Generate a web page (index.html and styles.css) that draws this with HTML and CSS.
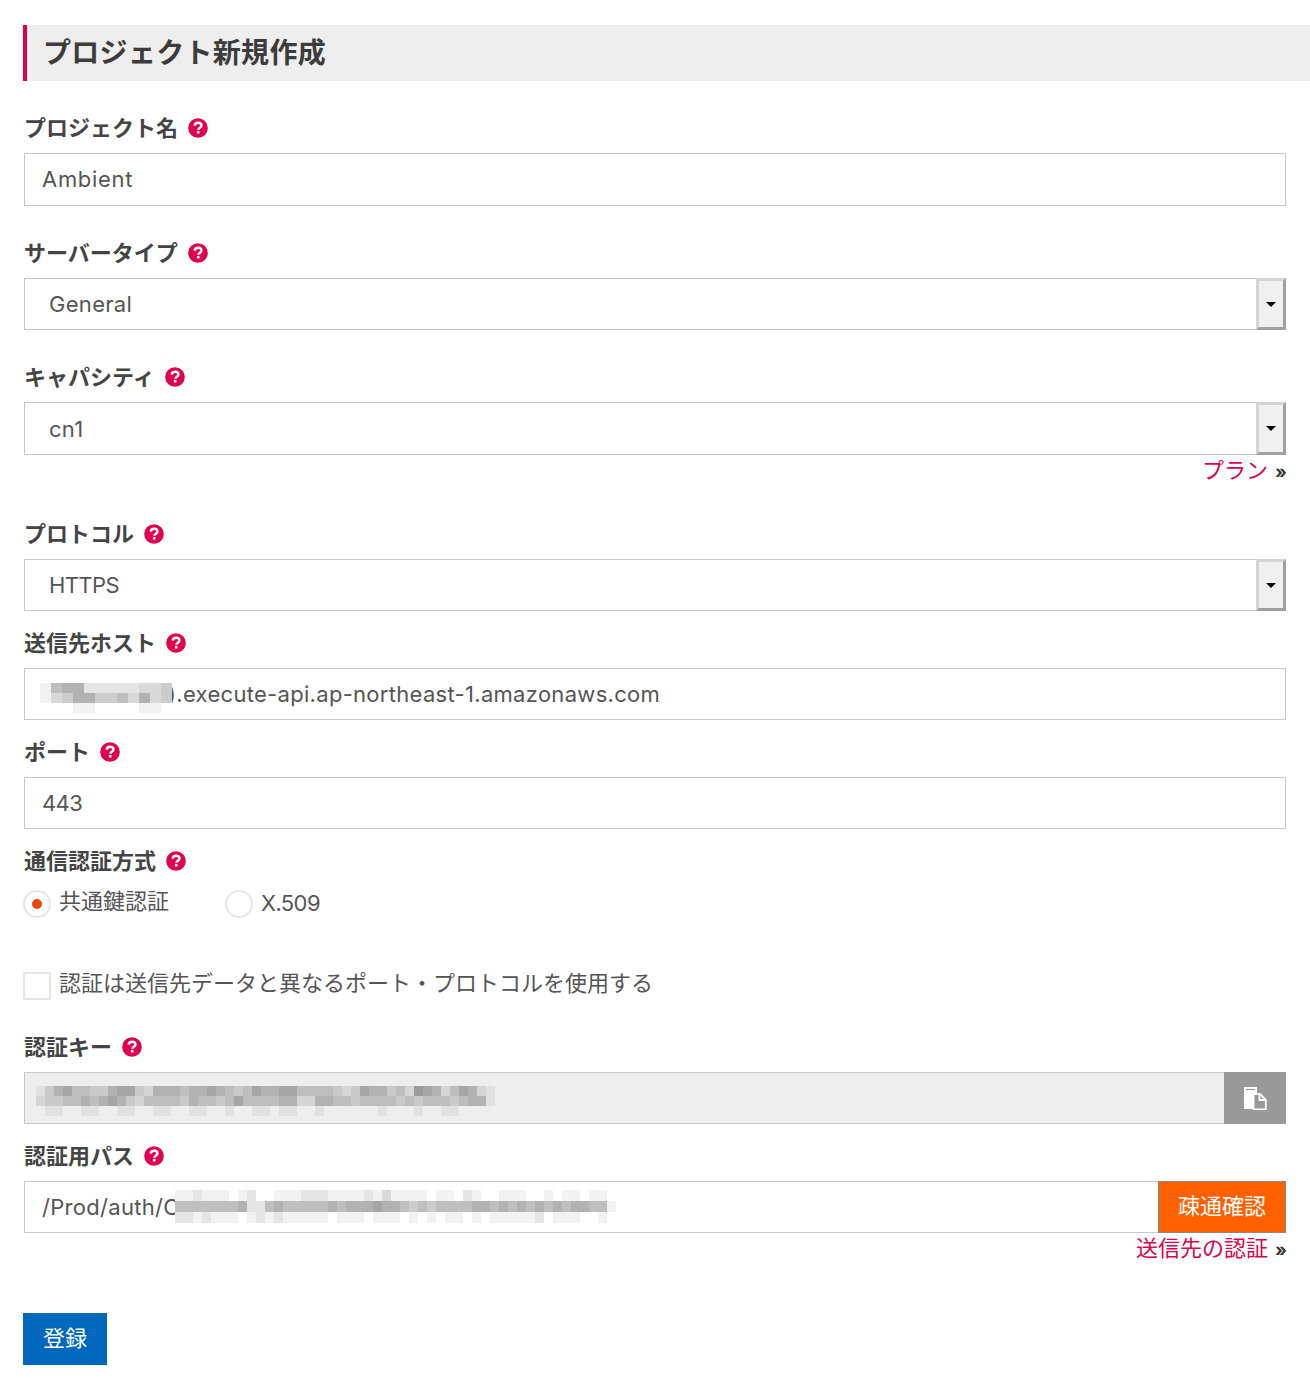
FILE: index.html
```html
<!DOCTYPE html>
<html lang="ja">
<head>
    <meta charset="utf-8">
    <title>プロジェクト新規作成</title>
    <link rel="stylesheet" href="styles.css">
</head>
<body>
    <svg class="icon-defs" width="0" height="0">
        <symbol id="help" viewBox="0 0 20 20">
            <circle cx="10" cy="10" r="9.8" fill="#e0004d"/>
            <path d="M6.7 7.6c.2-1.9 1.6-2.9 3.4-2.9 1.9 0 3.3 1.1 3.3 2.7 0 2.4-3 2.3-3 4.4" fill="none" stroke="#fff" stroke-width="2.5"/>
            <rect x="8.9" y="12.9" width="2.6" height="2.6" fill="#fff"/>
        </symbol>
    </svg>

    <h1 class="page-title">プロジェクト新規作成</h1>

    <form class="form">
        <div class="field">
            <label class="field-label">プロジェクト名<svg class="help"><use href="#help"/></svg></label>
            <input class="input input-tall" type="text" value="Ambient">
        </div>

        <div class="field">
            <label class="field-label">サーバータイプ<svg class="help"><use href="#help"/></svg></label>
            <div class="select"><span class="select-value">General</span><span class="select-btn"></span></div>
        </div>

        <div class="field field-link">
            <label class="field-label">キャパシティ<svg class="help"><use href="#help"/></svg></label>
            <div class="select select-tall"><span class="select-value">cn1</span><span class="select-btn"></span></div>
            <p class="more"><a href="#">プラン</a><span class="more-arrow">»</span></p>
        </div>

        <div class="field field-tight">
            <label class="field-label">プロトコル<svg class="help"><use href="#help"/></svg></label>
            <div class="select"><span class="select-value narrow">HTTPS</span><span class="select-btn"></span></div>
        </div>

        <div class="field field-tight">
            <label class="field-label">送信先ホスト<svg class="help"><use href="#help"/></svg></label>
            <div class="masked">
                <input class="input input-host" type="text" value=").execute-api.ap-northeast-1.amazonaws.com">
                <div class="blur blur-host" data-cell="11" data-height="10" data-rows="156622222334,134664453634,000110000110"></div>
            </div>
        </div>

        <div class="field field-tight">
            <label class="field-label">ポート<svg class="help"><use href="#help"/></svg></label>
            <input class="input narrow" type="text" value="443">
        </div>

        <div class="field field-auth">
            <label class="field-label">通信認証方式<svg class="help"><use href="#help"/></svg></label>
            <div class="choices">
                <label class="choice choice-first"><span class="radio radio-on"></span><span class="choice-text">共通鍵認証</span></label>
                <label class="choice"><span class="radio"></span><span class="choice-latin narrow">X.509</span></label>
            </div>
        </div>

        <label class="choice check-row"><span class="checkbox"></span><span class="choice-text">認証は送信先データと異なるポート・プロトコルを使用する</span></label>

        <div class="field field-tight">
            <label class="field-label">認証キー<svg class="help"><use href="#help"/></svg></label>
            <div class="group">
                <div class="masked group-main">
                    <input class="input input-readonly" type="text" readonly>
                    <div class="blur blur-key" data-cell="9" data-height="10" data-rows="135644335663255545565434655664444323655342765246521,233445456532444435443464444552255443444434344434551,011001100110011001100100110110010000001000100110000"></div>
                </div>
                <button class="btn-copy" type="button" aria-label="copy">
                    <svg width="24" height="24" viewBox="0 0 24 24">
                        <path d="M1 1h13v7h-4v15H1z" fill="#fff"/>
                        <path d="M3 3.500h9" stroke="#999" stroke-width="1.200"/>
                        <path d="M10.500 8h6.500l5.800 5.800v9.500H10.500z" fill="#999" stroke="#fff" stroke-width="1.800"/>
                        <path d="M16.500 8v6h6" fill="none" stroke="#fff" stroke-width="1.800"/>
                    </svg>
                </button>
            </div>
        </div>

        <div class="field field-link-short">
            <label class="field-label">認証用パス<svg class="help"><use href="#help"/></svg></label>
            <div class="group">
                <div class="masked group-main">
                    <input class="input input-path" type="text" value="/Prod/auth/C">
                    <div class="blur blur-path" data-cell="9" data-height="11" data-rows="11211101200111222111121311110110210011100101101100,55555556225655555656667665454555566565656565665510,22121110121211111011101110101011010111112011100100"></div>
                </div>
                <button class="btn-check" type="button">疎通確認</button>
            </div>
            <p class="more"><a href="#">送信先の認証</a><span class="more-arrow">»</span></p>
        </div>

        <button class="btn-submit" type="button">登録</button>
    </form>

    <script src="blur.js"></script>
</body>
</html>
```

FILE: styles.css
```css
* {
    box-sizing: border-box;
}
body {
    margin: 0;
    background: #fff;
    color: #444;
    font-family: Inter, "Noto Sans CJK JP", sans-serif;
    font-size: 22px;
}
.icon-defs {
    position: absolute;
}
.page-title {
    margin: 25px 0 33px 23px;
    height: 56px;
    padding-left: 16px;
    border-left: 4px solid #e0004d;
    background: #eee;
    font-size: 28px;
    font-weight: 700;
    letter-spacing: 0.3px;
    line-height: 57px;
    color: #3c3c3c;
}
.form {
    padding: 0 24px;
}
.field {
    margin-bottom: 33px;
}
.field-tight {
    margin-bottom: 18px;
}
.field-link {
    margin-bottom: 37px;
}
.field-link-short {
    margin-bottom: 52px;
}
.field-auth {
    margin-bottom: 54px;
}
.field-label {
    display: flex;
    align-items: center;
    height: 26px;
    padding-top: 1px;
    margin-bottom: 13px;
    font-weight: 700;
    line-height: 26px;
}
.help {
    width: 20px;
    height: 20px;
    margin-left: 10px;
}
.input {
    display: block;
    width: 100%;
    height: 52px;
    padding: 0 17px;
    border: 1px solid #c8c8c8;
    background: #fff;
    color: #555;
    font-family: inherit;
    font-size: 22px;
    letter-spacing: 0.3px;
    outline: none;
}
.input-tall {
    height: 53px;
    padding-bottom: 2px;
    letter-spacing: 0.7px;
}
.input-host {
    padding-left: 143px;
}
.input-readonly {
    background: #eee;
    border-right: none;
}
.input-path {
    border-right: none;
}
.select {
    display: flex;
    align-items: center;
    justify-content: space-between;
    height: 52px;
    border: 1px solid #c8c8c8;
    border-right: none;
}
.select-tall {
    height: 53px;
}
.select-value {
    padding-left: 24px;
    color: #555;
    letter-spacing: 0.3px;
}
.select-value.narrow,
.input.narrow,
.choice-latin.narrow {
    letter-spacing: -0.6px;
}
.select-btn {
    display: flex;
    align-items: center;
    justify-content: center;
    align-self: stretch;
    width: 30px;
    margin: -1px 0;
    border: 3px solid;
    border-color: #d4d4d4 #a0a0a0 #a0a0a0 #d4d4d4;
    background: #f0f0f0;
}
.select-btn::after {
    content: "";
    border: 5px solid transparent;
    border-top-color: #000;
    border-bottom: none;
}
.more {
    margin: 2px 0 0;
    height: 26px;
    line-height: 26px;
    text-align: right;
    font-size: 22px;
}
.more a {
    color: #e0004d;
    text-decoration: none;
}
.more-arrow {
    margin: 0 -1px 0 7px;
    font-size: 18px;
    font-weight: 700;
    color: #333;
}
.choices {
    display: flex;
    padding-top: 4px;
}
.choice {
    display: flex;
    align-items: center;
    height: 28px;
    color: #555;
}
.choice-first {
    margin-right: 57px;
}
.choice-text {
    padding-bottom: 10px;
}
.choice-latin {
    padding-bottom: 2px;
}
.radio,
.checkbox {
    display: flex;
    align-items: center;
    justify-content: center;
    flex: none;
    width: 28px;
    height: 28px;
    margin: 0 8px 0 -1px;
    border: 2px solid #e6e6e6;
    background: #fff;
}
.radio {
    border-radius: 50%;
}
.radio-on::after {
    content: "";
    width: 10px;
    height: 10px;
    border-radius: 50%;
    background: #e8490f;
}
.check-row {
    margin-bottom: 33px;
}
.group {
    display: flex;
}
.group-main {
    flex: 1;
}
.masked {
    position: relative;
}
.blur {
    position: absolute;
}
.blur svg {
    display: block;
}
.blur-host {
    left: 16px;
    top: 15px;
    background: #fff;
}
.blur-key {
    left: 12px;
    top: 14px;
}
.blur-path {
    left: 151px;
    top: 9px;
    background: #fff;
}
.btn-copy {
    display: flex;
    align-items: center;
    justify-content: center;
    width: 62px;
    height: 52px;
    padding: 0;
    border: none;
    background: #999;
}
.btn-check {
    width: 128px;
    height: 52px;
    padding: 0 0 6px;
    border: 1px solid #888;
    background: #ff6000;
    color: #fff;
    font-family: inherit;
    font-size: 22px;
}
.btn-submit {
    display: block;
    width: 84px;
    height: 52px;
    margin-left: -1px;
    padding: 0 0 6px;
    border: none;
    background: #0068bd;
    color: #fff;
    font-family: inherit;
    font-size: 22px;
}
```

FILE: blur.js
```js
// Draw the pixelated patches that hide the secret parts of the values
document.querySelectorAll('.blur').forEach(function (el) {
    var cell = Number(el.dataset.cell);
    var height = Number(el.dataset.height);
    var rows = el.dataset.rows.split(',');
    var ns = 'http://www.w3.org/2000/svg';
    var svg = document.createElementNS(ns, 'svg');
    svg.setAttribute('width', rows[0].length * cell);
    svg.setAttribute('height', rows.length * height);
    rows.forEach(function (row, y) {
        row.split('').forEach(function (level, x) {
            var rect = document.createElementNS(ns, 'rect');
            rect.setAttribute('x', x * cell);
            rect.setAttribute('y', y * height);
            rect.setAttribute('width', cell);
            rect.setAttribute('height', height);
            rect.setAttribute('fill-opacity', level * 0.05);
            svg.appendChild(rect);
        });
    });
    el.appendChild(svg);
});
```
